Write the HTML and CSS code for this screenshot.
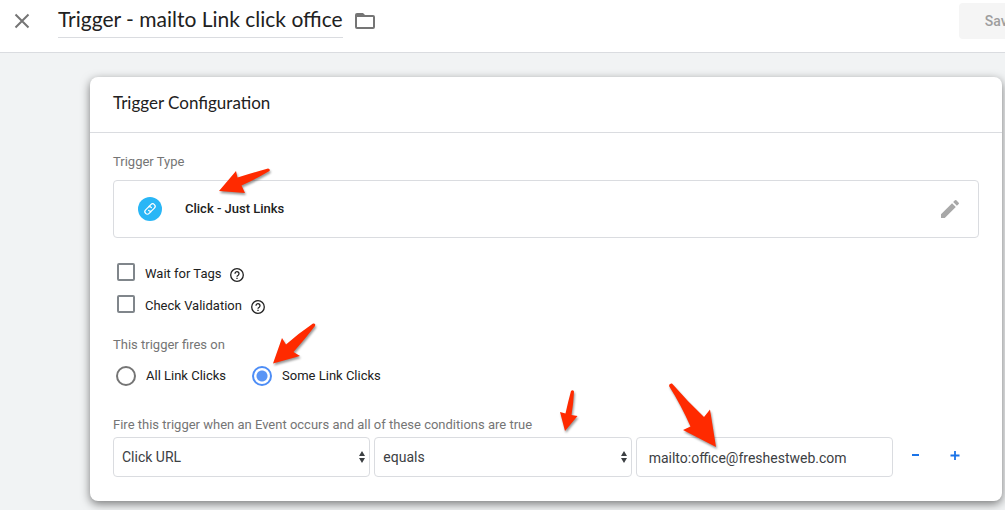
FILE: index.html
```html
<!DOCTYPE html>
<html lang="en">
<head>
  <meta charset="UTF-8">
  <meta name="viewport" content="width=device-width, initial-scale=1.0">
  <title>Trigger Configuration</title>
  <link rel="stylesheet" href="styles.css">
</head>
<body>
  <header class="topbar">
    <button class="icon-button" type="button" aria-label="Close">
      <svg width="16" height="16" viewBox="0 0 16 16"><path d="M1.5 1.5l13 13M14.5 1.5l-13 13" fill="none" stroke="#757575" stroke-width="2"/></svg>
    </button>
    <h1 class="title">Trigger - mailto Link click office</h1>
    <button class="icon-button folder" type="button" aria-label="Move to folder">
      <svg width="20" height="16" viewBox="0 0 20 16"><path d="M2 0h6l2 2h8a2 2 0 0 1 2 2v10a2 2 0 0 1-2 2H2a2 2 0 0 1-2-2V2a2 2 0 0 1 2-2zm0 4v10h16V4z" fill="#757575" fill-rule="evenodd"/></svg>
    </button>
    <button class="save" type="button" disabled>Save</button>
  </header>

  <main class="canvas">
    <section class="card">
      <h2 class="card-title">Trigger Configuration</h2>

      <form class="card-body">
        <div class="label">Trigger Type</div>
        <div class="type-box">
          <span class="type-icon">
            <svg width="24" height="24" viewBox="0 0 24 24">
              <g transform="rotate(-45 12 12)" fill="none" stroke="#fff" stroke-width="1.2" stroke-linecap="round">
                <path d="M11 14.5H8.3a2.5 2.5 0 0 1 0-5h3.2a2.5 2.5 0 0 1 2.5 2.5"/>
                <path d="M13 9.5h2.7a2.5 2.5 0 0 1 0 5h-3.2a2.5 2.5 0 0 1-2.5-2.5"/>
              </g>
            </svg>
          </span>
          <span class="type-name">Click - Just Links</span>
          <button class="icon-button" type="button" aria-label="Edit trigger type">
            <svg width="24" height="24" viewBox="0 0 24 24"><path d="M3 17.25V21h3.75L17.81 9.94l-3.75-3.75zM20.71 7.04a1 1 0 0 0 0-1.41l-2.34-2.34a1 1 0 0 0-1.41 0l-1.83 1.83 3.75 3.75z" fill="#a8a8a8"/></svg>
          </button>
        </div>

        <div class="checks">
          <div class="check-row">
            <input class="checkbox" type="checkbox" id="wait">
            <label for="wait">Wait for Tags</label>
            <svg class="help" width="14" height="14" viewBox="0 0 14 14"><circle cx="7" cy="7" r="6.3"/><path d="M5 5.7a2 2 0 1 1 3.2 1.5C7.4 7.700 7 8 7 8.8M7 9.800v1.200"/></svg>
          </div>
          <div class="check-row">
            <input class="checkbox" type="checkbox" id="validation">
            <label for="validation">Check Validation</label>
            <svg class="help" width="14" height="14" viewBox="0 0 14 14"><circle cx="7" cy="7" r="6.3"/><path d="M5 5.7a2 2 0 1 1 3.2 1.5C7.4 7.700 7 8 7 8.8M7 9.800v1.200"/></svg>
          </div>
        </div>

        <div class="label">This trigger fires on</div>
        <div class="radios">
          <input class="radio" type="radio" name="fires" id="all">
          <label for="all">All Link Clicks</label>
          <input class="radio" type="radio" name="fires" id="some" checked>
          <label for="some">Some Link Clicks</label>
        </div>

        <div class="label">Fire this trigger when an Event occurs and all of these conditions are true</div>
        <div class="condition">
          <div class="select-wrap">
            <select class="field" aria-label="Variable">
              <option>Click URL</option>
            </select>
            <svg class="caret" width="6" height="12" viewBox="0 0 6 12"><path d="M0 5l3-5 3 5zM0 7h6l-3 5z" fill="#3c4043"/></svg>
          </div>
          <div class="select-wrap">
            <select class="field" aria-label="Operator">
              <option>equals</option>
            </select>
            <svg class="caret" width="6" height="12" viewBox="0 0 6 12"><path d="M0 5l3-5 3 5zM0 7h6l-3 5z" fill="#3c4043"/></svg>
          </div>
          <input class="field value" type="text" aria-label="Value" value="mailto:office@freshestweb.com">
          <div class="row-actions">
            <button class="icon-button" type="button" aria-label="Remove condition">
              <svg width="10" height="10" viewBox="0 0 10 10"><path d="M2 5h7" stroke="#1a73e8" stroke-width="2"/></svg>
            </button>
            <button class="icon-button" type="button" aria-label="Add condition">
              <svg width="10" height="10" viewBox="0 0 10 10"><path d="M0.5 5.500h9M5 1v9" stroke="#1a73e8" stroke-width="1.8"/></svg>
            </button>
          </div>
        </div>
      </form>

      <!-- Annotation arrows over the form -->
      <svg class="arrow arrow-type" width="54" height="26" viewBox="0 0 54 26"><path d="M1 23L18 3l1.500 6.500Q34 5 50 .5q2.500.5 1.500 2.500Q38 11 23.500 17.500L27 25z"/></svg>
      <svg class="arrow arrow-radio" width="46" height="44" viewBox="0 0 46 44"><path d="M1 41.500L10 16l4 6.500Q27 11 41 1.500q3-.5 2 2.500Q33 17 21.500 30l6.500 4z"/></svg>
      <svg class="arrow arrow-operator" width="20" height="44" viewBox="0 0 20 44"><path d="M6 42L1 23l5.500 1.500Q9 13 12 2q2-1.500 3 .5Q14.500 14 12.500 26l6 1z"/></svg>
      <svg class="arrow arrow-value" width="50" height="68" viewBox="0 0 50 68"><path d="M48 65L15 48l7.500-3.500Q13 23 1 4q0-3 3-2.500Q20 20 36 35l6-7.500z"/></svg>
    </section>
  </main>
</body>
</html>
```
FILE: styles.css
```css
* {
  box-sizing: border-box;
}

body {
  margin: 0;
  min-height: 100vh;
  background: #f1f3f4;
  color: #212121;
  font-family: Roboto, Arial, sans-serif;
  font-size: 13px;
  line-height: 16px;
  overflow-x: hidden;
}

/* Top bar */
.topbar {
  display: flex;
  align-items: center;
  height: 53px;
  padding: 0 0 10px 14px;
  background: #fff;
  border-bottom: 1px solid #dadce0;
  overflow: hidden;
}

.icon-button {
  display: flex;
  padding: 0;
  border: 0;
  background: none;
  cursor: pointer;
}

.title {
  margin: 0 0 0 28px;
  padding-bottom: 4px;
  border-bottom: 1px solid #dadce0;
  font-family: Lato, sans-serif;
  font-size: 21px;
  font-weight: 400;
  line-height: 28px;
  white-space: nowrap;
}

.folder {
  margin-left: 12px;
}

.save {
  flex: none;
  width: 82px;
  height: 36px;
  margin-left: auto;
  margin-right: -36px;
  border: 0;
  border-radius: 4px;
  background: #f5f5f5;
  color: #9e9e9e;
  font-family: Roboto, sans-serif;
  font-size: 14px;
  font-weight: 500;
}

/* Card */
.canvas {
  padding: 24px 3px 9px 90px;
}

.card {
  position: relative;
  background: #fff;
  border-radius: 8px;
  box-shadow: 0 3px 10px rgba(0, 0, 0, 0.5);
}

.card-title {
  margin: 0;
  padding: 14px 23px 17px;
  border-bottom: 1px solid #dadce0;
  font-family: Lato, sans-serif;
  font-size: 17px;
  font-weight: 400;
  line-height: 24px;
}

.card-body {
  padding: 21px 23px 24px;
}

.label {
  color: #757575;
}

.type-box {
  display: flex;
  align-items: center;
  height: 58px;
  margin-top: 10px;
  padding: 0 16px 0 24px;
  border: 1px solid #dadce0;
  border-radius: 4px;
}

.type-icon {
  display: flex;
  border-radius: 50%;
  background: #29b6f6;
}

.type-name {
  flex: 1;
  margin-left: 23px;
  font-weight: 500;
}

/* Tick boxes and radios */
.checks {
  margin: 18px 0 17px;
}

.check-row {
  display: flex;
  align-items: center;
  height: 32px;
  padding-left: 4px;
}

.check-row label {
  padding-top: 3px;
}

.checkbox,
.radio {
  appearance: none;
  margin: 0 10px 0 0;
  border: 2px solid #757575;
  background: #fff;
}

.checkbox {
  width: 18px;
  height: 18px;
  border-radius: 2px;
  border-color: #80868b;
}

.help {
  margin: 5px 0 0 9px;
  fill: none;
  stroke: #212121;
  stroke-width: 1.3;
}

.radios {
  display: flex;
  align-items: center;
  height: 20px;
  margin: 13px 0 31px;
  padding-left: 3px;
}

.radio {
  width: 20px;
  height: 20px;
  border-radius: 50%;
}

.radio:checked {
  margin-left: 26px;
  border-color: #4d8df6;
  background: radial-gradient(circle, #5a95f5 5px, #fff 6px);
}

/* Condition row */
.condition {
  display: grid;
  grid-template-columns: 1fr 1fr 1fr 82px;
  gap: 4px;
  margin-top: 4px;
}

.select-wrap {
  position: relative;
}

.field {
  appearance: none;
  width: 100%;
  height: 40px;
  padding: 0 8px;
  border: 1px solid #dadce0;
  border-radius: 4px;
  background: #fff;
  color: #3c4043;
  font-family: Roboto, sans-serif;
  font-size: 14px;
}

.value {
  padding: 2px 12px 0;
}

.caret {
  position: absolute;
  top: 14px;
  right: 5px;
  pointer-events: none;
}

.row-actions {
  display: flex;
  align-items: center;
  justify-content: space-between;
  padding: 0 19px 4px 13px;
}

/* Arrows */
.arrow {
  position: absolute;
  overflow: visible;
  fill: #ff2a00;
  filter: drop-shadow(1px 2px 1px rgba(0, 0, 0, 0.4));
  pointer-events: none;
}

.arrow-type {
  left: 128px;
  top: 91px;
}

.arrow-radio {
  left: 182px;
  top: 245px;
}

.arrow-operator {
  left: 469px;
  top: 312px;
}

.arrow-value {
  left: 578px;
  top: 305px;
}
```
